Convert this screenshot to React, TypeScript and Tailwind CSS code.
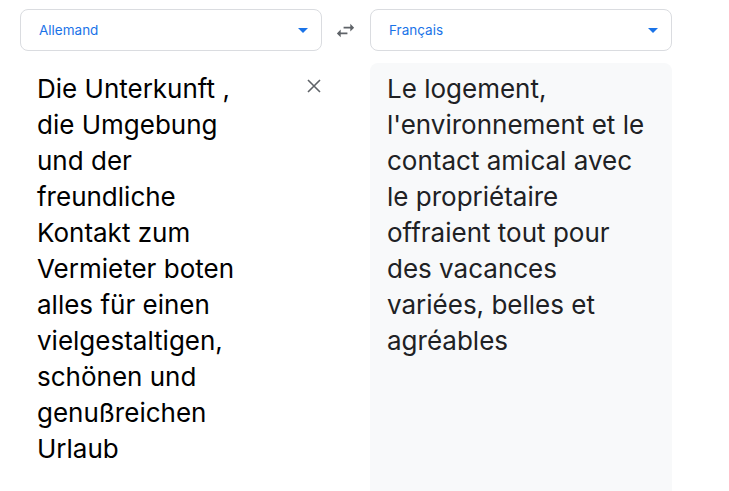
import React from 'react';

const source = [
  'Die Unterkunft ,',
  'die Umgebung',
  'und der',
  'freundliche',
  'Kontakt zum',
  'Vermieter boten',
  'alles für einen',
  'vielgestaltigen,',
  'schönen und',
  'genußreichen',
  'Urlaub',
];

const target = [
  'Le logement,',
  "l'environnement et le",
  'contact amical avec',
  'le propriétaire',
  'offraient tout pour',
  'des vacances',
  'variées, belles et',
  'agréables',
];

const LangSelect: React.FC<{ label: string }> = ({ label }) => (
  <div className="h-[42px] w-[302px] rounded-lg border border-[#dadce0] bg-white flex items-center justify-between pl-[18px] pr-[12px]">
    <span className="text-[13.5px] text-[#1a73e8]">{label}</span>
    <svg width="12" height="6" viewBox="0 0 12 6" className="mt-[2px]">
      <path d="M1 0h10L6 5z" fill="#1a73e8" />
    </svg>
  </div>
);

const App: React.FC = () => {
  return (
    <div
      className="w-[729px] h-[491px] bg-white overflow-hidden pl-[20px] pt-[9px]"
      style={{ fontFamily: 'Inter, "Liberation Sans", sans-serif' }}
    >
      <div className="flex items-center">
        <LangSelect label="Allemand" />
        <div className="w-[48px] flex justify-center">
          <svg width="23" height="23" viewBox="0 0 24 24" fill="#5f6368" className="-ml-[1px]">
            <path d="M6.99 11L3 15l3.99 4v-3H14v-2H6.99v-3zM21 9l-3.99-4v3H10v2h7.01v3L21 9z" />
          </svg>
        </div>
        <LangSelect label="Français" />
      </div>
      <div className="flex mt-[12px]">
        <div className="w-[302px] flex pl-[17px] pt-[8px] pr-[1px]">
          <p className="flex-1 whitespace-nowrap text-[26px] leading-[36px] text-[#000] tracking-[0px]">
            {source.map((l, i) => (
              <span key={i} className="block">{l}</span>
            ))}
          </p>
          <svg width="14" height="14" viewBox="0 0 14 14" className="mt-[8px]" stroke="#5f6368" strokeWidth="1.6">
            <path d="M1 1l12 12M13 1L1 13" />
          </svg>
        </div>
        <div className="ml-[48px] w-[302px] h-[440px] rounded-t-lg bg-[#f8f9fa] pl-[17px] pr-[8px] pt-[8px]">
          <p className="whitespace-nowrap text-[26px] leading-[36px] text-[#202124] tracking-[0px]">
            {target.map((l, i) => (
              <span key={i} className="block">{l}</span>
            ))}
          </p>
        </div>
      </div>
    </div>
  );
};

export default App;
